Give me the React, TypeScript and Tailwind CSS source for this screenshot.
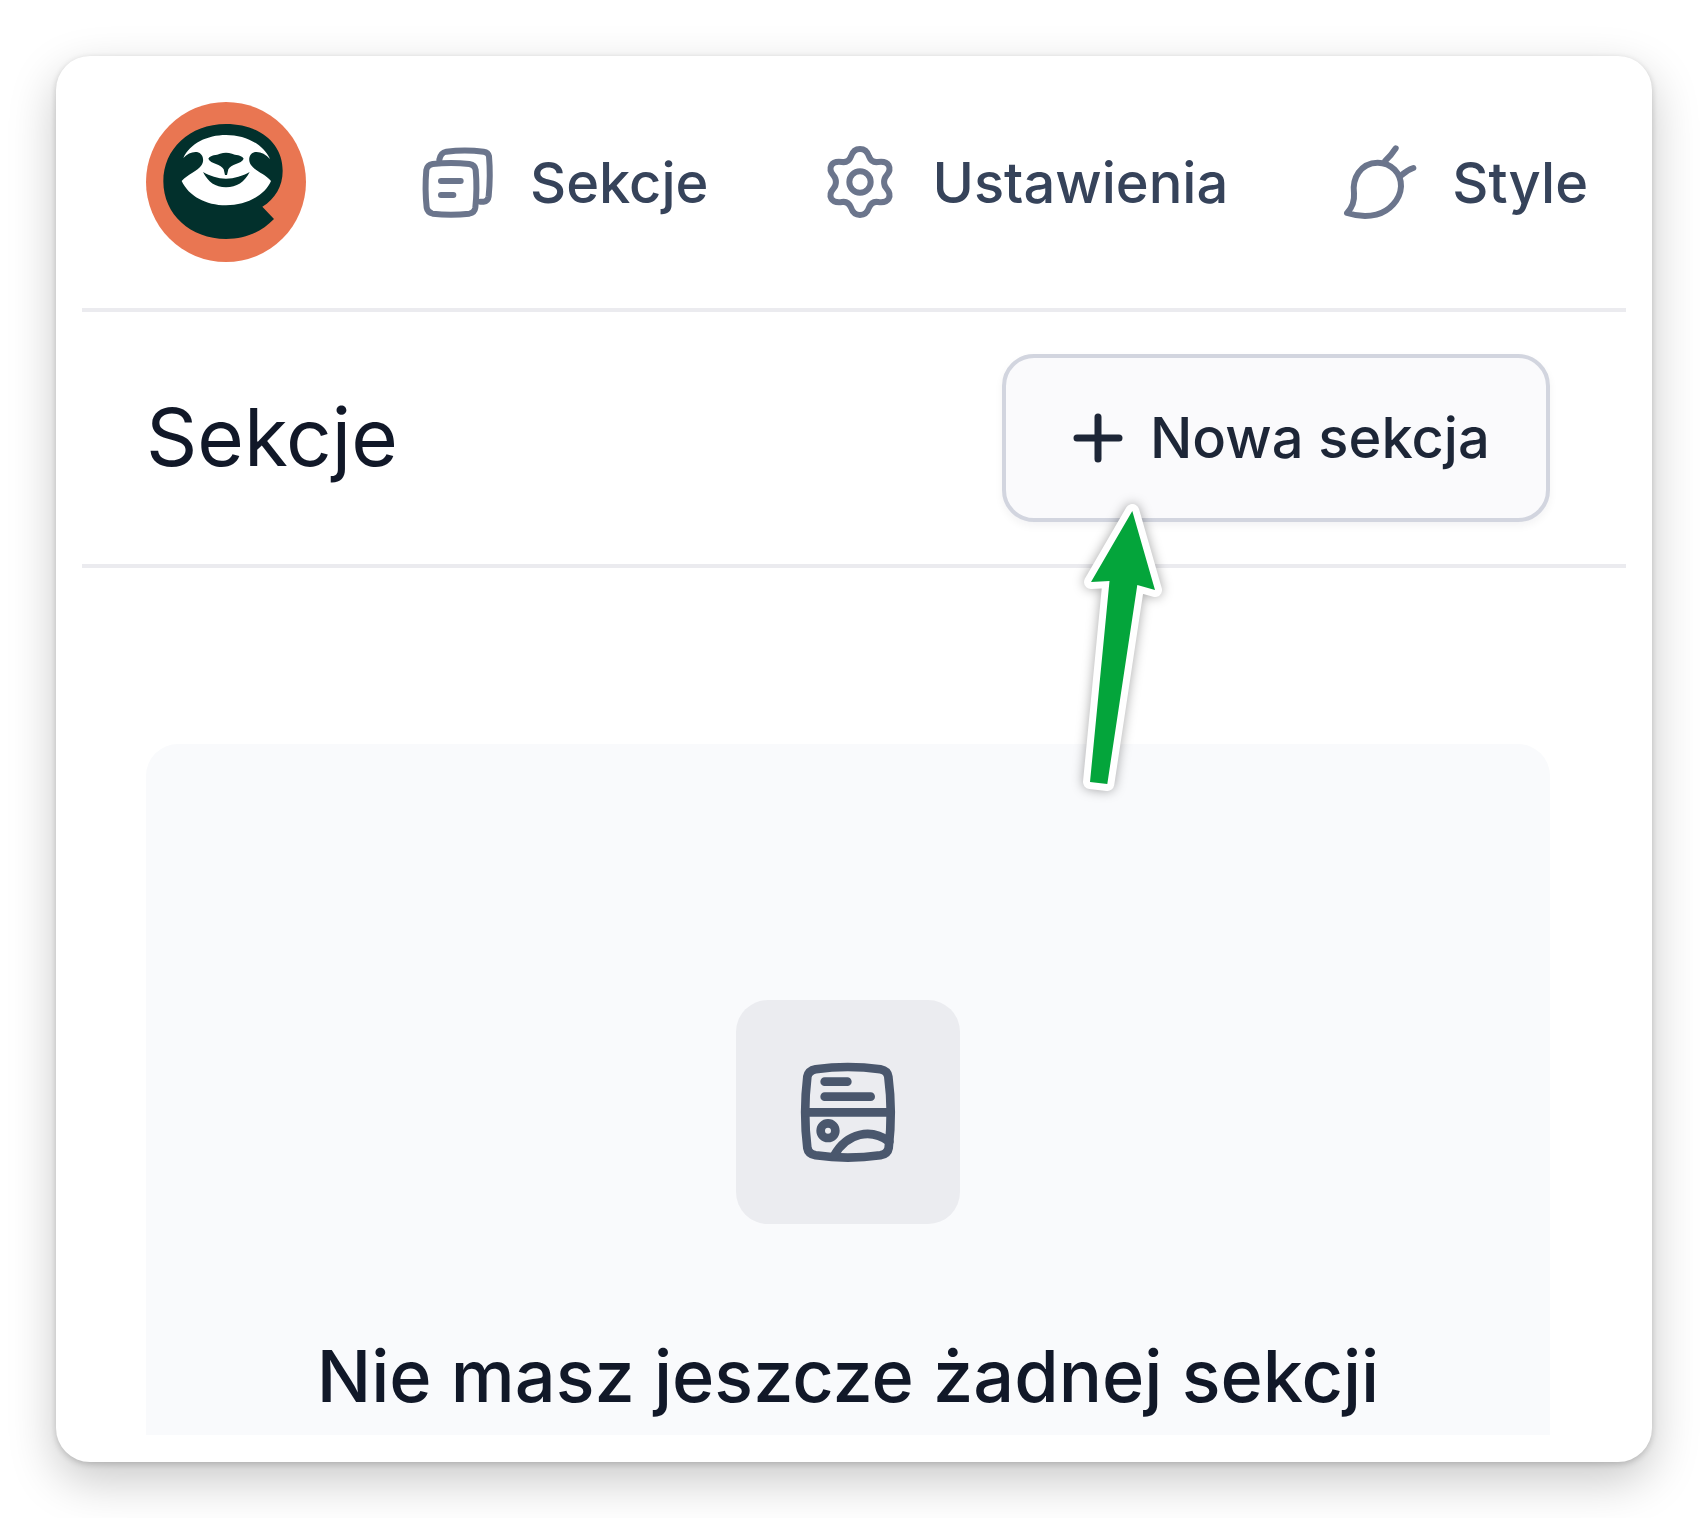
import type { ReactNode } from 'react'

function Logo() {
  return (
    <svg viewBox="30 30 480 480" className="size-40 shrink-0">
      <circle cx="270" cy="270" r="240" fill="#e97652" />
      <path
        d="M270 96C160 96 82 172 82 268C82 368 164 441 270 441C330 441 376 420 414 381L379 344C417 321 440 283 440 236C440 152 368 96 270 96Z"
        fill="#02302c"
      />
      <path
        d="M270 129C214 129 162 154 142 198C154 185 169 178 183 180C201 184 206 205 197 219C184 238 156 246 137 267C158 312 210 340 270 340C330 340 385 312 405 267C388 246 358 238 345 219C335 205 339 184 357 180C373 178 388 186 402 201C380 154 326 129 270 129Z"
        fill="#fff"
      />
      <path
        d="M217 200C224 187 242 190 252 185C264 181 276 181 288 185C298 190 316 187 323 200C317 216 283 216 277 232L273 249H267L263 232C257 216 223 216 217 200Z"
        fill="#02302c"
      />
      <path
        d="M201 240C222 252 245 260 270 260C295 260 320 252 341 240C326 270 302 286 270 286C238 286 216 270 201 240Z"
        fill="#02302c"
      />
    </svg>
  )
}

function SectionsIcon() {
  return (
    <svg
      viewBox="25 29 240 240"
      className="size-20"
      fill="none"
      stroke="#6b758c"
      strokeWidth="18"
      strokeLinecap="round"
      strokeLinejoin="round">
      <path d="M69 95Q124 89 179 95Q196 98 198 113Q203 170 197 226Q195 241 179 244Q124 250 69 244Q54 241 51 226Q45 170 50 113Q53 98 69 95Z" />
      <path d="M89 82C92 66 99 60 110 58Q165 51 222 58Q236 60 238 72Q243 131 237 192Q235 207 222 208H212" />
      <path d="M94 146H153M94 188H131" />
    </svg>
  )
}

function SettingsIcon() {
  return (
    <svg
      viewBox="0 0 240 240"
      className="size-20"
      fill="none"
      stroke="#6b758c"
      strokeWidth="18"
      strokeLinejoin="round">
      <path d="M120 21C137 21 143 31 147 43C152 56 160 62 174 60C188 58 199 58 206 70C213 83 207 92 199 101C190 111 190 129 199 139C207 148 213 157 206 170C199 182 188 182 174 180C160 178 152 184 147 197C143 209 137 219 120 219C103 219 97 209 93 197C88 184 80 178 66 180C52 182 41 182 34 170C27 157 33 148 41 139C50 129 50 111 41 101C33 92 27 83 34 70C41 58 52 58 66 60C80 62 88 56 93 43C97 31 103 21 120 21Z" />
      <circle cx="120" cy="120" r="32" />
    </svg>
  )
}

function StyleIcon() {
  return (
    <svg
      viewBox="30 30 240 240"
      className="size-20"
      fill="none"
      stroke="#6b758c"
      strokeWidth="18"
      strokeLinecap="round"
      strokeLinejoin="round">
      <path d="M51 243C68 226 74 210 72 184C66 139 91 93 143 92C184 92 214 124 213 163C211 203 178 238 139 248C109 255 76 251 51 243Z" />
      <path d="M166 86Q182 72 197 49M213 131Q231 114 250 108" />
    </svg>
  )
}

function EmptyIcon() {
  return (
    <svg
      viewBox="205 205 300 320"
      className="h-[106.67px] w-[100px]"
      fill="none"
      stroke="#4a576d"
      strokeWidth="26"
      strokeLinecap="round"
      strokeLinejoin="round">
      <path d="M258 236Q354 222 452 236Q473 240 476 258Q490 365 477 472Q474 490 452 494Q354 508 258 494Q236 490 233 472Q220 365 233 258Q237 240 258 236Z" />
      <path d="M285 273H353M285 318H423M228 365H482" />
      <circle cx="295" cy="420" r="22" />
      <path d="M314 494C352 426 424 412 479 453" />
    </svg>
  )
}

function Arrow() {
  return (
    <svg
      viewBox="1070 490 110 320"
      className="pointer-events-none absolute top-[490px] left-[1070px] h-[320px] w-[110px] drop-shadow-[0_0_6px_rgba(0,0,0,0.35)]">
      <path
        d="M1132.3 511L1155 590L1137.3 585L1107.3 784L1090 782L1109.5 581L1091 582Z"
        fill="#04a53b"
        stroke="#fff"
        strokeWidth="14"
        strokeLinejoin="round"
        paintOrder="stroke"
      />
    </svg>
  )
}

interface NavItemProps {
  icon: ReactNode
  label: string
}
function NavItem({ icon, label }: NavItemProps) {
  return (
    <a className="flex shrink-0 items-center gap-8 text-[56px] leading-none font-medium text-[#36435a]">
      {icon}
      <span className="pt-0.5">{label}</span>
    </a>
  )
}

export default function App() {
  return (
    <div className="relative h-[1518px] w-[1708px] overflow-hidden bg-white p-14 font-['Inter',sans-serif]">
      <div className="h-[1406px] w-[1596px] rounded-[34px] bg-white p-[26px] shadow-[0_2px_6px_rgba(0,0,0,0.18),0_18px_48px_rgba(0,0,0,0.22)]">
        <header className="flex h-[230px] items-center border-b-4 border-[#ebebef] pb-[26px] pl-16">
          <Logo />
          <nav className="ml-28 flex items-center gap-28 whitespace-nowrap">
            <NavItem icon={<SectionsIcon />} label="Sekcje" />
            <NavItem icon={<SettingsIcon />} label="Ustawienia" />
            <NavItem icon={<StyleIcon />} label="Style" />
          </nav>
        </header>

        <div className="flex h-64 items-center justify-between border-b-4 border-[#ebebef] pr-[76px] pl-16">
          <h1 className="pb-[3px] text-[80px] leading-none text-[#111828]">Sekcje</h1>
          <button className="flex h-[168px] w-[548px] items-center rounded-[32px] border-4 border-[#d2d5df] bg-[#fafafc] pl-[66px] text-[56px] font-medium whitespace-nowrap text-[#1d2637] shadow-[0_4px_8px_rgba(16,24,40,0.05)]">
            <svg viewBox="0 0 52 52" className="mr-[26px] size-[52px]" fill="none" stroke="currentColor" strokeWidth="7" strokeLinecap="round">
              <path d="M26 5V47M5 26H47" />
            </svg>
            Nowa sekcja
          </button>
        </div>

        <div className="mt-44 ml-16 flex h-[691px] w-[1404px] flex-col items-center rounded-t-[32px] bg-[#f9fafc] pt-64">
          <div className="flex size-56 items-center justify-center rounded-[32px] bg-[#ebecf0]">
            <EmptyIcon />
          </div>
          <p className="mt-[116px] text-[72px] leading-[72px] font-medium whitespace-nowrap text-[#111828]">
            Nie masz jeszcze żadnej sekcji
          </p>
        </div>
      </div>
      <Arrow />
    </div>
  )
}
